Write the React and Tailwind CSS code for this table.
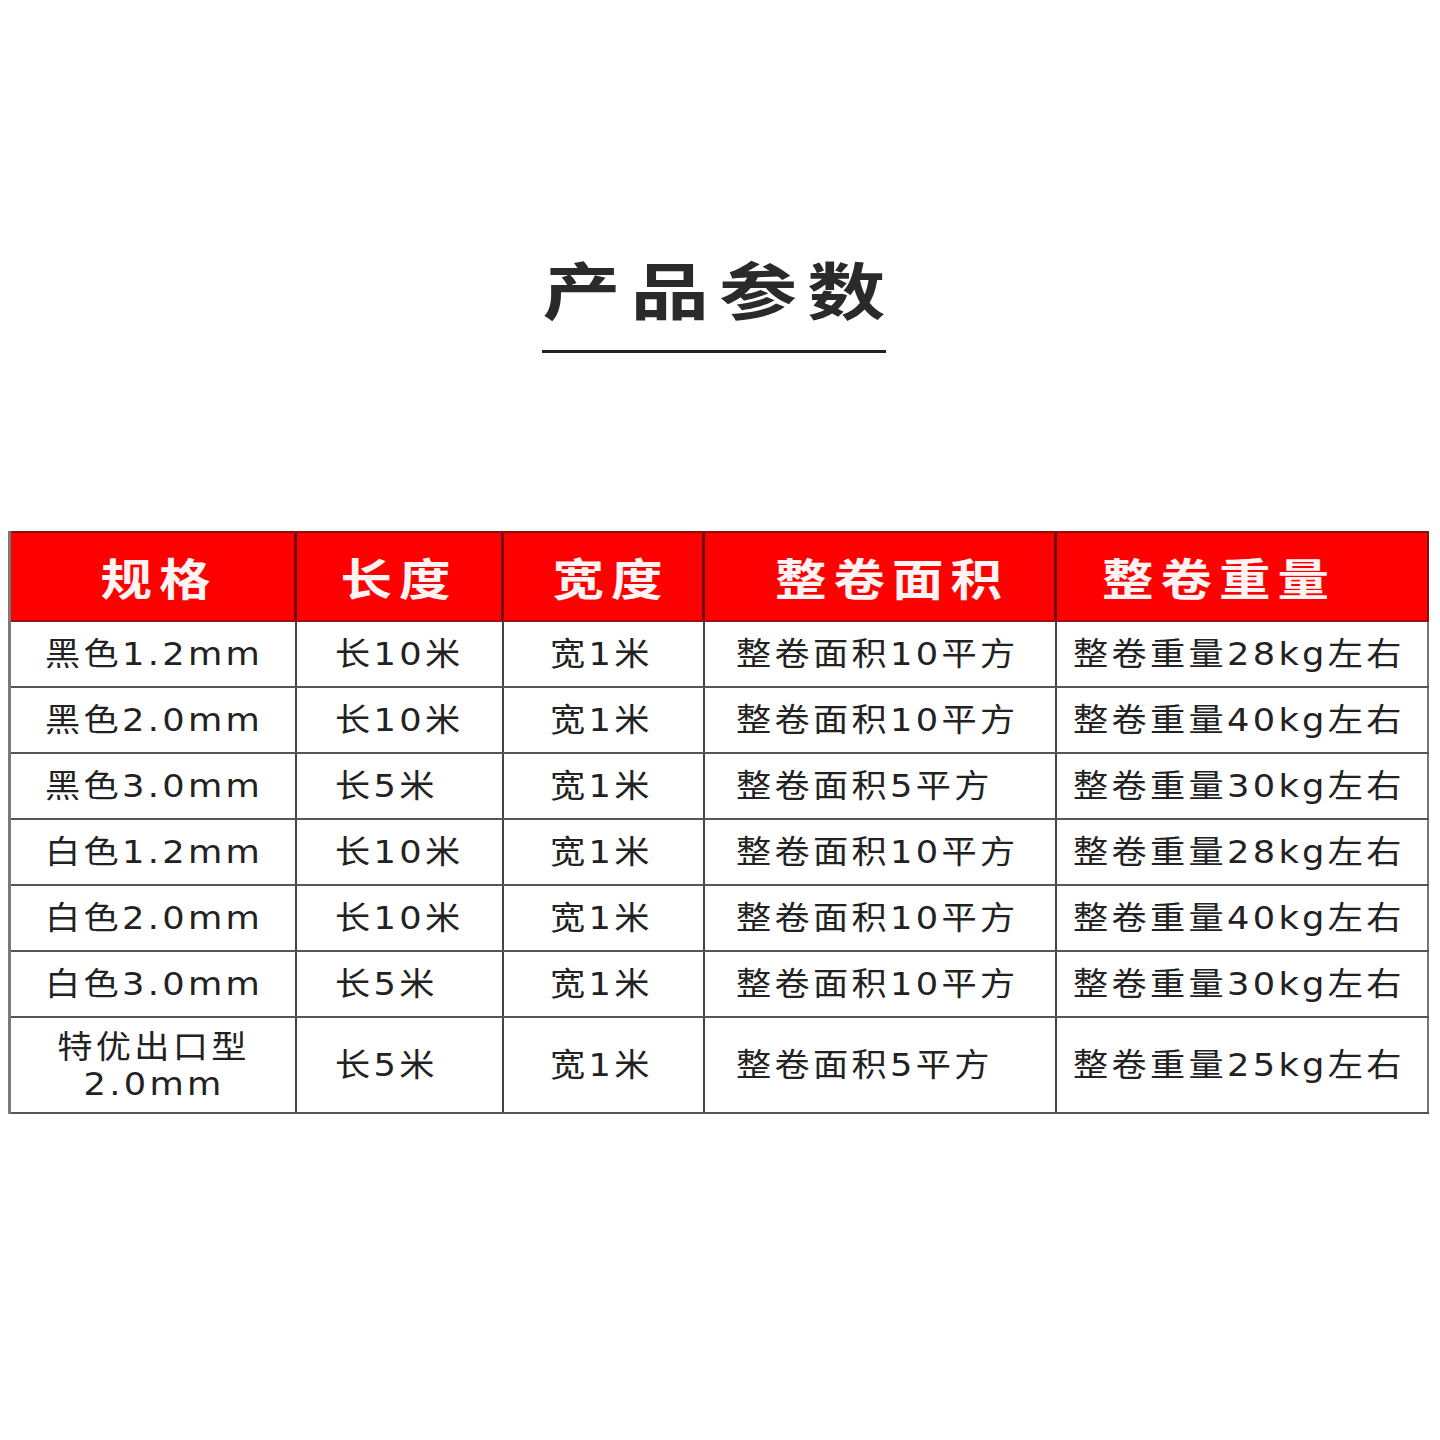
import React from "react";

const rows = [
  ["黑色1.2mm", "长10米", "宽1米", "整卷面积10平方", "整卷重量28kg左右"],
  ["黑色2.0mm", "长10米", "宽1米", "整卷面积10平方", "整卷重量40kg左右"],
  ["黑色3.0mm", "长5米", "宽1米", "整卷面积5平方", "整卷重量30kg左右"],
  ["白色1.2mm", "长10米", "宽1米", "整卷面积10平方", "整卷重量28kg左右"],
  ["白色2.0mm", "长10米", "宽1米", "整卷面积10平方", "整卷重量40kg左右"],
  ["白色3.0mm", "长5米", "宽1米", "整卷面积10平方", "整卷重量30kg左右"],
];

const headPad = ["pl-[12px]", "pl-[0px]", "pl-[16px]", "pl-[24px]", "pr-[46px]"];
const bodyPad = ["justify-center pl-[2px]", "pl-[38px]", "pl-[46px]", "pl-[31px]", "pl-[16px]"];
const heads = ["规格", "长度", "宽度", "整卷面积", "整卷重量"];

function T({ children, center }) {
  return (
    <span
      className={`inline-block text-[32px] tracking-[3px] leading-none scale-x-[1.1] whitespace-nowrap ${center ? "origin-center" : "origin-left"}`}
    >
      {children}
    </span>
  );
}

export default function App() {
  return (
    <div className="w-[1440px] min-h-[1440px] bg-white font-['DejaVu_Sans','Noto_Sans_CJK_SC',sans-serif] text-[#222]">
      <div className="pt-[257px] flex flex-col items-center">
        <div className="font-['Noto_Sans_CJK_SC',sans-serif] font-bold text-[62px] leading-none tracking-[8px] -ml-[2px] text-[#2a2a2a] scale-x-[1.26]">
          产品参数
        </div>
        <div className="mt-[31px] w-[344px] h-[3px] bg-[#222] -ml-[12px]"></div>
      </div>

      <div className="mt-[178px] ml-[8px] w-[1421px] border-l-[3px] border-[#7a7a7a]">
        <div className="grid grid-cols-[286px_207px_201px_352px_372px] h-[91px] bg-[#ff0000] border-t-2 border-b-2 border-t-[#8a1010] border-b-[#9a1212]">
          {heads.map((h, i) => (
            <div
              key={i}
              className={`flex items-center justify-center ${headPad[i]} ${i < 4 ? "border-r-[3px] border-[#6e0a0a]" : "border-r-2 border-[#8a1010]"}`}
            >
              <span className="text-[44px] font-bold tracking-[6px] leading-none text-[#fff3f3] font-['Noto_Sans_CJK_SC',sans-serif] scale-x-[1.17] inline-block">
                {h}
              </span>
            </div>
          ))}
        </div>
        {rows.map((r, ri) => (
          <div
            key={ri}
            className="grid grid-cols-[286px_207px_201px_352px_372px] h-[66px] border-b-2 border-[#555]"
          >
            {r.map((c, ci) => (
              <div
                key={ci}
                className={`flex items-center ${bodyPad[ci]} border-r-2 ${ci === 4 ? "border-[#777]" : "border-[#444]"}`}
              >
                <T center={ci === 0}>{c}</T>
              </div>
            ))}
          </div>
        ))}
        <div className="grid grid-cols-[286px_207px_201px_352px_372px] h-[96px] border-b-2 border-[#555]">
          <div className="flex flex-col items-center justify-center gap-[5px] pl-[2px] border-r-2 border-[#444]">
            <T center>特优出口型</T>
            <T center>2.0mm</T>
          </div>
          <div className={`flex items-center ${bodyPad[1]} border-r-2 border-[#444]`}><T>长5米</T></div>
          <div className={`flex items-center ${bodyPad[2]} border-r-2 border-[#444]`}><T>宽1米</T></div>
          <div className={`flex items-center ${bodyPad[3]} border-r-2 border-[#444]`}><T>整卷面积5平方</T></div>
          <div className={`flex items-center ${bodyPad[4]} border-r-2 border-[#777]`}><T>整卷重量25kg左右</T></div>
        </div>
      </div>
    </div>
  );
}
